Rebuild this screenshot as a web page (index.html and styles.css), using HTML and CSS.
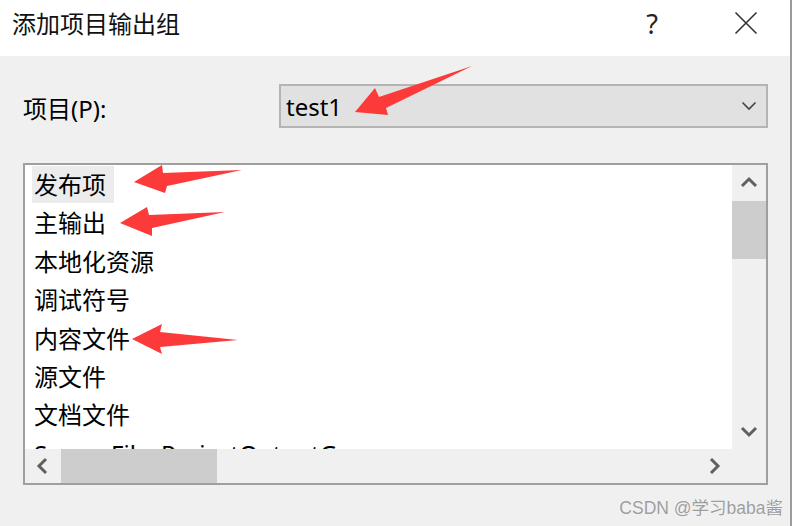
FILE: index.html
```html
<!DOCTYPE html>
<html lang="zh-CN">
<head>
<meta charset="utf-8">
<title>添加项目输出组</title>
<link rel="stylesheet" href="styles.css">
</head>
<body>
<div class="dialog">
  <header class="titlebar">
    <span class="title">添加项目输出组</span>
    <div class="title-buttons">
      <span class="help">?</span>
      <span class="close">
        <svg width="24" height="24" viewBox="0 0 24 24"><path d="M1.5 1.5 L22.5 22.5 M22.5 1.5 L1.5 22.5" stroke="#333" stroke-width="1.6" fill="none"/></svg>
      </span>
    </div>
  </header>
  <main class="content">
    <div class="project-row">
      <label class="label">项目(P):</label>
      <div class="combo">
        <span class="combo-text">test1</span>
        <svg class="combo-chev" width="16" height="10" viewBox="0 0 16 10"><polyline points="1.5,1.5 8,8 14.5,1.5" stroke="#444" stroke-width="1.6" fill="none"/></svg>
      </div>
    </div>
    <div class="listbox">
      <ul class="items">
        <li class="item"><span class="item-text selected">发布项</span></li>
        <li class="item"><span class="item-text">主输出</span></li>
        <li class="item"><span class="item-text">本地化资源</span></li>
        <li class="item"><span class="item-text">调试符号</span></li>
        <li class="item"><span class="item-text">内容文件</span></li>
        <li class="item"><span class="item-text">源文件</span></li>
        <li class="item"><span class="item-text">文档文件</span></li>
        <li class="item"><span class="item-text">SourceFilesProjectOutputGroup</span></li>
      </ul>
      <div class="vscroll">
        <div class="sbtn">
          <svg width="18" height="12" viewBox="0 0 18 12"><polyline points="2,10 9,3 16,10" stroke="#606060" stroke-width="3" fill="none"/></svg>
        </div>
        <div class="vthumb"></div>
        <div class="vspace"></div>
        <div class="sbtn">
          <svg width="18" height="12" viewBox="0 0 18 12"><polyline points="2,2 9,9 16,2" stroke="#606060" stroke-width="3" fill="none"/></svg>
        </div>
      </div>
      <div class="hscroll">
        <div class="sbtn">
          <svg width="12" height="18" viewBox="0 0 12 18"><polyline points="10,2 3,9 10,16" stroke="#606060" stroke-width="3" fill="none"/></svg>
        </div>
        <div class="hthumb"></div>
        <div class="hspace"></div>
        <div class="sbtn">
          <svg width="12" height="18" viewBox="0 0 12 18"><polyline points="2,2 9,9 2,16" stroke="#606060" stroke-width="3" fill="none"/></svg>
        </div>
      </div>
      <div class="corner"></div>
    </div>
  </main>
</div>
<svg class="annotations" width="800" height="526" viewBox="0 0 800 526">
  <polygon points="355,112 375,88 379,97 472,66 386,108 388,115" fill="#fd3a3a"/>
  <polygon points="134,182 162,165 163,173 242,170 167,186 165,193" fill="#fd3a3a"/>
  <polygon points="120,223 147,207 149,215 225,212 152,228 152,236" fill="#fd3a3a"/>
  <polygon points="132,339 162,324 160,332 238,340 160,347 162,354" fill="#fd3a3a"/>
</svg>
<div class="watermark">CSDN @学习baba酱</div>
</body>
</html>
```
FILE: styles.css
```css
* { box-sizing: border-box; }
html, body { margin: 0; padding: 0; }
body {
  width: 800px;
  height: 526px;
  background: #fff;
  font-family: "Noto Sans", "Noto Sans CJK SC", sans-serif;
  color: #000;
  position: relative;
  overflow: hidden;
}
.dialog {
  width: 792px;
  height: 526px;
  border-right: 2px solid #9b9b9b;
  background: #f0f0f0;
  display: flex;
  flex-direction: column;
}
.titlebar {
  height: 56px;
  flex: none;
  background: #fff;
  display: flex;
  align-items: center;
  justify-content: space-between;
  padding: 0 0 10px 12px;
}
.title {
  font-family: "Noto Sans CJK SC", sans-serif;
  font-size: 24px;
  line-height: 1;
  color: #111;
}
.title-buttons { display: flex; align-items: center; }
.help {
  width: 100px;
  text-align: center;
  font-size: 27px;
  line-height: 1;
  color: #222;
}
.close {
  width: 88px;
  display: flex;
  justify-content: center;
  align-items: center;
}
.close svg { display: block; }
.content {
  flex: 1;
  padding: 28px 22px 0 23px;
  display: flex;
  flex-direction: column;
}
.project-row {
  height: 44px;
  display: flex;
  align-items: center;
}
.label {
  width: 256px;
  flex: none;
  font-size: 24px;
  line-height: 1;
  margin-top: 6px;
}
.combo {
  flex: 1;
  height: 44px;
  background: #e1e1e1;
  border: 2px solid #b4b4b4;
  display: flex;
  align-items: center;
  padding: 2px 9px 0 5px;
}
.combo-text {
  flex: 1;
  font-size: 24px;
  line-height: 1;
}
.combo-chev { display: block; margin-top: -2px; }
.listbox {
  margin-top: 35px;
  height: 322px;
  border: 2px solid #9f9f9f;
  background: #fff;
  display: grid;
  grid-template-columns: 1fr 34px;
  grid-template-rows: 1fr 34px;
}
.items {
  list-style: none;
  margin: 0;
  padding: 1px 0 0 7px;
  overflow: hidden;
  font-size: 24px;
}
.item {
  height: 38.4px;
  white-space: nowrap;
}
.item-text {
  display: inline-block;
  line-height: 37px;
  padding: 0 8px 0 2px;
}
.item-text.selected { background: #ececec; }
.vscroll {
  background: #f0f0f0;
  display: flex;
  flex-direction: column;
}
.sbtn {
  flex: none;
  width: 34px;
  height: 34px;
  display: flex;
  align-items: center;
  justify-content: center;
}
.sbtn svg { display: block; }
.vthumb {
  height: 58px;
  margin-top: 2px;
  background: #cdcdcd;
}
.vspace { flex: 1; }
.hscroll {
  background: #f0f0f0;
  display: flex;
}
.hthumb {
  width: 156px;
  margin-left: 2px;
  background: #cdcdcd;
}
.hspace { flex: 1; }
.corner { background: #f0f0f0; }
.annotations {
  position: absolute;
  left: 0;
  top: 0;
  pointer-events: none;
}
.watermark {
  position: absolute;
  right: 17px;
  top: 496px;
  font-family: "Liberation Sans", "Noto Sans CJK SC", sans-serif;
  font-size: 17.5px;
  line-height: 24px;
  color: #9d9d9d;
  text-shadow: 0 0 1px #fff;
  white-space: nowrap;
}
```
